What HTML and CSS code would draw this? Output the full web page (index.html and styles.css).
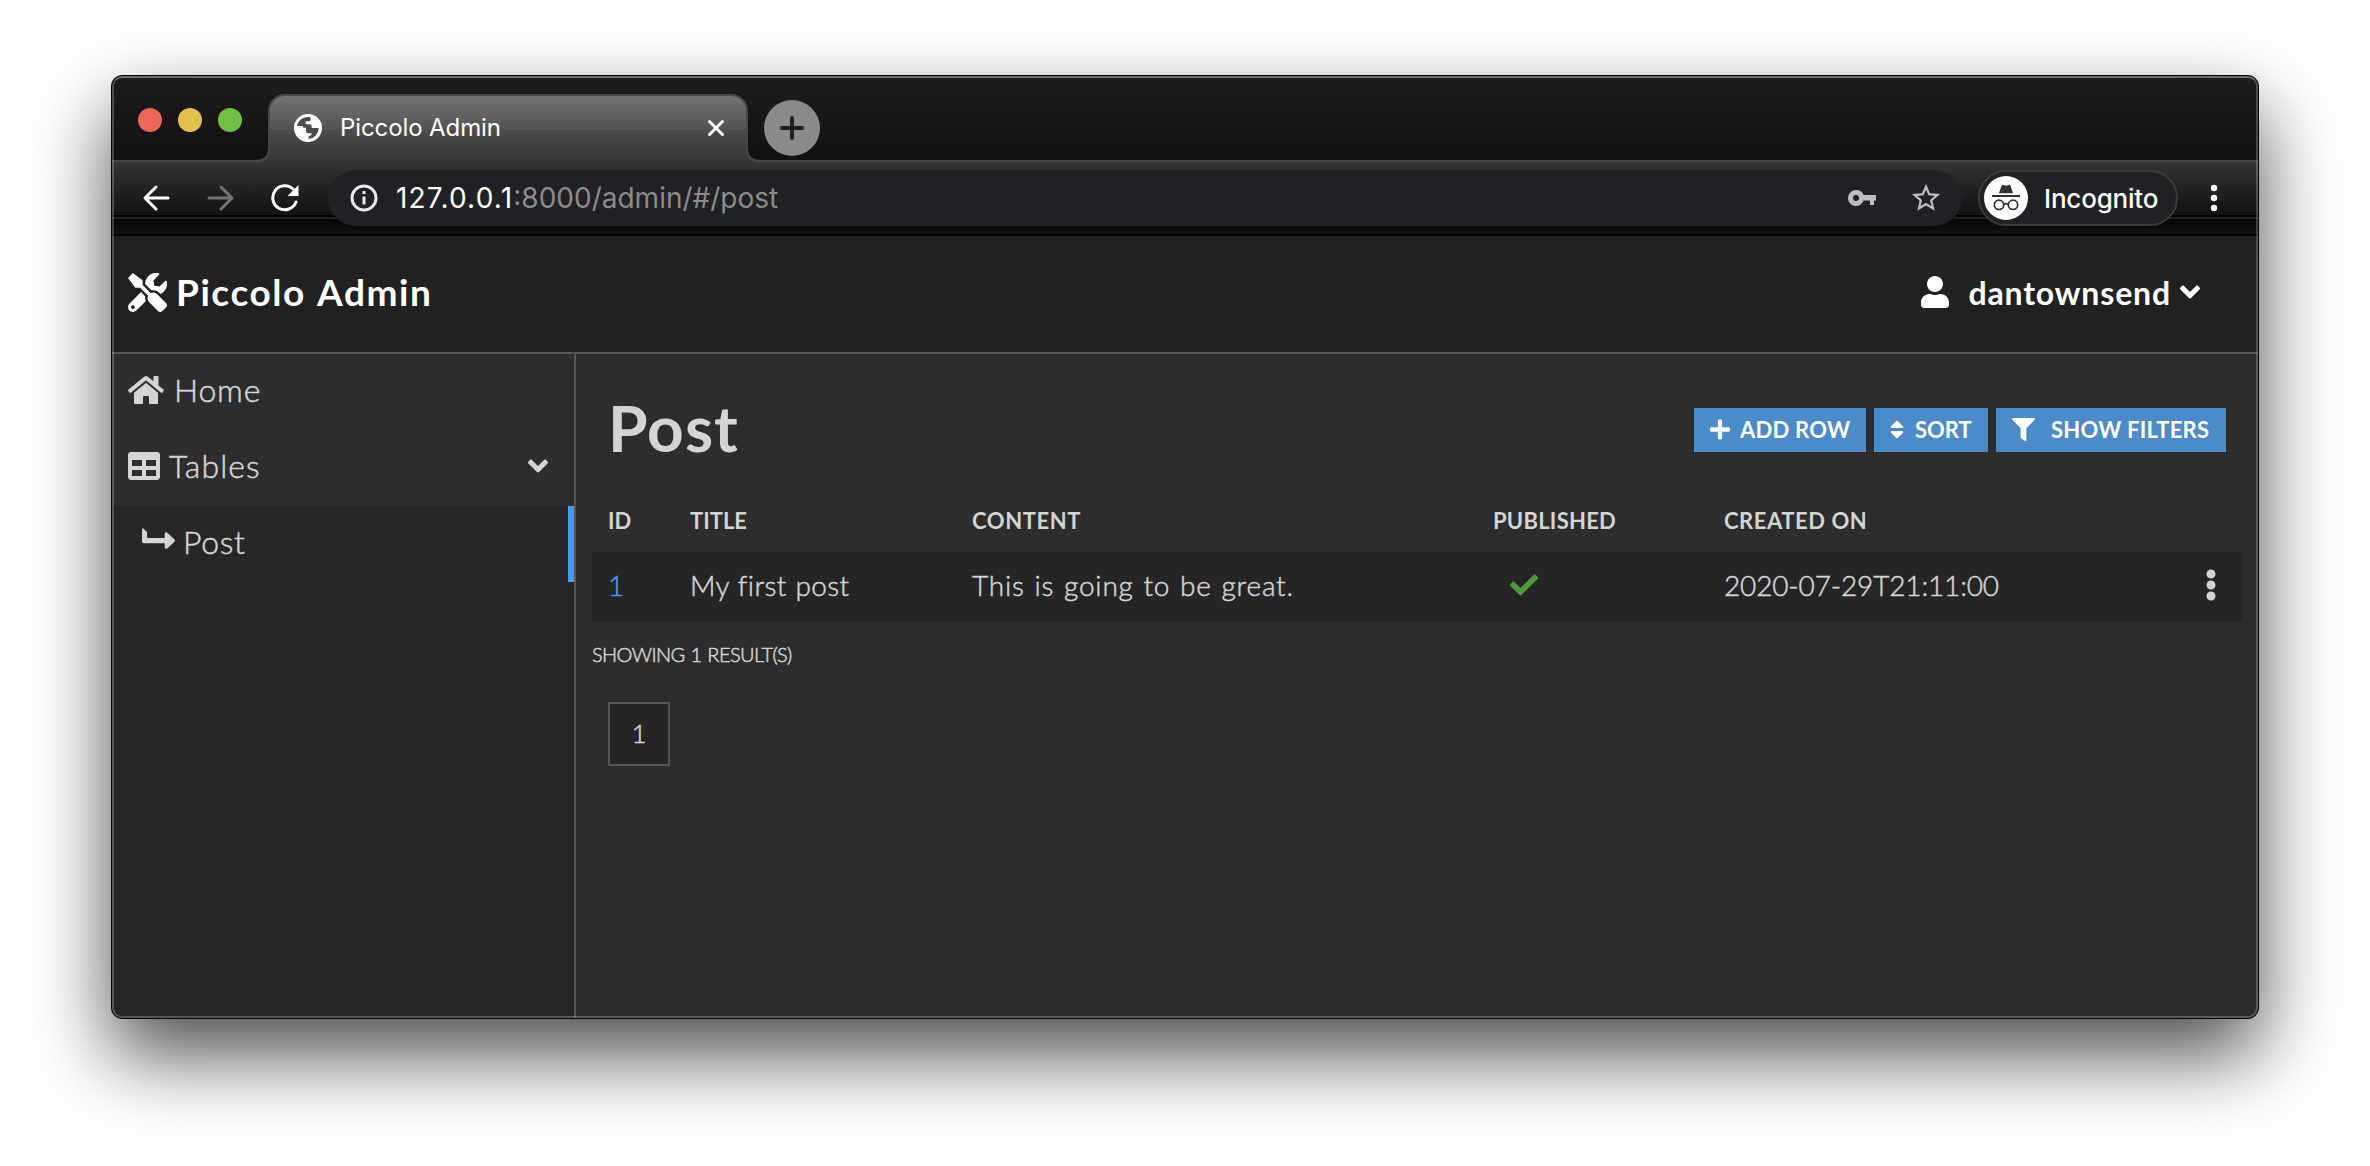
FILE: index.html
```html
<!DOCTYPE html>
<html lang="en">
<head>
<meta charset="utf-8">
<title>Piccolo Admin</title>
<link rel="stylesheet" href="styles.css">
</head>
<body>
<div class="window">
  <div class="tabstrip">
    <div class="lights"><i class="light red"></i><i class="light yellow"></i><i class="light green"></i></div>
    <div class="tab">
      <svg class="tab-shape" width="504" height="76" viewBox="0 0 504 76">
        <defs><linearGradient id="tabfill" x1="0" y1="0" x2="0" y2="1"><stop offset="0" stop-color="#757575"/><stop offset=".45" stop-color="#545454"/><stop offset=".46" stop-color="#4d4d4d"/><stop offset="1" stop-color="#303030"/></linearGradient></defs>
        <path d="M0 76V69Q13 67 13 54V17A16 16 0 0 1 29 1H475A16 16 0 0 1 491 17V54Q491 67 504 69V76Z" fill="url(#tabfill)"/>
        <path d="M0 67Q13 67 13 54V17A16 16 0 0 1 29 1H475A16 16 0 0 1 491 17V54Q491 67 504 67" fill="none" stroke="#484848" stroke-width="2"/>
      </svg>
      <svg class="globe" width="34" height="34" viewBox="-51 -51 102 102"><circle r="42" fill="#fff"/><path d="M-33-6A33 33 0 0 1 8-32V-25Q8-20 2-20H-7V-11H6Q11-11 11-5V0H32A33 33 0 0 1 2 33V24Q11 24 11 16H0Q-6 16-6 10V-1H-12Q-16-1-16-6Z" fill="#4c4c4c"/></svg>
      <span class="tab-title">Piccolo Admin</span>
      <svg class="tab-close" width="18" height="18" viewBox="0 0 18 18" stroke="#fff" stroke-width="3" stroke-linecap="round"><path d="M2.500 2.500l13 13M15.500 2.500l-13 13"/></svg>
    </div>
    <div class="newtab"><svg width="24" height="24" viewBox="0 0 24 24" stroke="#202124" stroke-width="4" stroke-linecap="round"><path d="M12 2v20M2 12h20"/></svg></div>
  </div>

  <div class="toolbar">
    <svg class="nav-back" width="28" height="28" viewBox="0 0 28 28" fill="none" stroke="#fff" stroke-width="3" stroke-linecap="round" stroke-linejoin="round"><path d="M26 14H3M14 3L3 14l11 11"/></svg>
    <svg class="nav-fwd" width="28" height="28" viewBox="0 0 28 28" fill="none" stroke="#737373" stroke-width="3" stroke-linecap="round" stroke-linejoin="round"><path d="M2 14h23M14 3l11 11-11 11"/></svg>
    <svg class="nav-reload" width="28" height="28" viewBox="0 0 28 28"><path d="M25 18A12 12 0 1 1 22.500 5.500" fill="none" stroke="#fff" stroke-width="3" stroke-linecap="round"/><path d="M27.500 1v11h-11z" fill="#fff"/></svg>
    <div class="omnibox">
      <svg class="info" width="28" height="28" viewBox="0 0 28 28"><circle cx="14" cy="14" r="12" fill="none" stroke="#e8eaed" stroke-width="3"/><path d="M12.500 12.500h3v8h-3zM12.500 7h3v3h-3z" fill="#e8eaed"/></svg>
      <span class="url"><b>127.0.0.1</b>:8000/admin/#/post</span>
      <svg class="key" width="28" height="18" viewBox="0 0 28 18" fill="#bdbdbd"><path fill-rule="evenodd" d="M8 1a8 8 0 1 0 7.600 10.500H22V16h4v-4.500h2V6H15.600A8 8 0 0 0 8 1zm0 5a3 3 0 1 1 0 6 3 3 0 0 1 0-6z"/></svg>
      <svg class="star" width="34" height="34" viewBox="0 0 24 24" fill="#bdbdbd"><path d="M22 9.240l-7.190-.62L12 2 9.190 8.630 2 9.240l5.460 4.730L5.820 21 12 17.270 18.180 21l-1.630-7.030L22 9.240zM12 15.400l-3.760 2.270 1-4.280-3.320-2.880 4.380-.38L12 6.100l1.710 4.040 4.380.38-3.320 2.880 1 4.280L12 15.400z"/></svg>
    </div>
    <div class="incognito">
      <svg width="44" height="44" viewBox="0 0 44 44"><circle cx="22" cy="22" r="22" fill="#fff"/><path d="M8 19h28v2H8zM14.800 17.200l3.200-8.400 4 1 4-1 3.200 8.400z" fill="#303134"/><g fill="none" stroke="#303134" stroke-width="1.700"><circle cx="15" cy="28.800" r="4.700"/><circle cx="29" cy="28.800" r="4.700"/><path d="M19.700 28.500q2.300-1.600 4.600 0"/></g></svg>
      <span>Incognito</span>
    </div>
    <svg class="menu-dots" width="8" height="28" viewBox="0 0 8 28" fill="#fff"><circle cx="4" cy="4" r="3.200"/><circle cx="4" cy="14" r="3.200"/><circle cx="4" cy="24" r="3.200"/></svg>
  </div>

  <header class="appbar">
    <svg width="39" height="39" viewBox="0 0 512 512" fill="#fff"><path d="M501.100 395.700L384 278.600c-23.100-23.100-57.600-27.600-85.400-13.900L192 158.100V96L64 0 0 64l96 128h62.100l106.600 106.600c-13.600 27.800-9.200 62.300 13.900 85.400l117.100 117.100c14.600 14.600 38.200 14.600 52.700 0l52.700-52.700c14.500-14.600 14.500-38.200 0-52.700zM331.700 225c28.300 0 54.900 11 74.900 31l19.400 19.400c15.800-6.900 30.800-16.500 43.800-29.500 37.100-37.100 49.700-89.300 37.900-136.700-2.200-9-13.500-12.100-20.100-5.500l-74.400 74.400-67.900-11.300L334 98.900l74.400-74.400c6.600-6.600 3.400-17.900-5.700-20.200-47.400-11.700-99.600.9-136.600 37.900-28.500 28.500-41.900 66.100-41.200 103.600l82.100 82.100c8.100-1.900 16.500-2.900 24.700-2.900zm-103.900 82l-56.700-56.700L18.700 402.800c-25 25-25 65.500 0 90.500s65.500 25 90.500 0l123.600-123.600c-7.600-19.900-9.900-41.600-5-62.700zM64 472c-13.200 0-24-10.800-24-24 0-13.300 10.700-24 24-24s24 10.700 24 24c0 13.200-10.700 24-24 24z"/></svg>
    <span class="brand">Piccolo Admin</span>
    <svg class="user" width="28" height="32" viewBox="0 0 448 512" fill="#fff"><path d="M224 256c70.700 0 128-57.300 128-128S294.700 0 224 0 96 57.300 96 128s57.300 128 128 128zm89.600 32h-16.700c-22.200 10.200-46.900 16-72.900 16s-50.600-5.800-72.900-16h-16.700C60.200 288 0 348.200 0 422.400V464c0 26.500 21.500 48 48 48h352c26.500 0 48-21.500 48-48v-41.600c0-74.200-60.200-134.400-134.400-134.400z"/></svg>
    <span class="username">dantownsend</span>
    <svg width="20" height="32" viewBox="0 0 320 512" fill="#fff"><path d="M143 352.300L7 216.300c-9.400-9.400-9.400-24.600 0-33.900l22.600-22.600c9.400-9.400 24.600-9.400 33.900 0l96.400 96.400 96.400-96.400c9.400-9.400 24.600-9.400 33.900 0l22.600 22.600c9.400 9.400 9.400 24.600 0 33.900l-136 136c-9.200 9.400-24.400 9.400-33.800 0z"/></svg>
  </header>

  <div class="page">
    <nav class="sidebar">
      <a class="item">
        <svg width="36" height="32" viewBox="0 0 576 512"><path d="M280.370 148.260L96 300.110V464a16 16 0 0 0 16 16l112.060-.29a16 16 0 0 0 15.920-16V368a16 16 0 0 1 16-16h64a16 16 0 0 1 16 16v95.640a16 16 0 0 0 16 16.050L464 480a16 16 0 0 0 16-16V300L295.670 148.260a12.190 12.190 0 0 0-15.300 0zM571.600 251.470L488 182.560V44.050a12 12 0 0 0-12-12h-56a12 12 0 0 0-12 12v72.610L318.470 43a48 48 0 0 0-61 0L4.340 251.470a12 12 0 0 0-1.600 16.900l25.500 31A12 12 0 0 0 45.150 301l235.220-193.740a12.190 12.190 0 0 1 15.300 0L530.900 301a12 12 0 0 0 16.900-1.600l25.500-31a12 12 0 0 0-1.700-16.930z"/></svg>
        <span class="t-home">Home</span>
      </a>
      <a class="item">
        <svg width="32" height="32" viewBox="0 0 512 512"><path d="M464 32H48C21.490 32 0 53.490 0 80v352c0 26.510 21.490 48 48 48h416c26.510 0 48-21.490 48-48V80c0-26.510-21.490-48-48-48zM224 416H64v-96h160v96zm0-160H64v-96h160v96zm224 160H288v-96h160v96zm0-160H288v-96h160v96z"/></svg>
        <span class="t-tables">Tables</span>
        <svg class="caret" width="20" height="32" viewBox="0 0 320 512"><path d="M143 352.300L7 216.300c-9.400-9.400-9.400-24.600 0-33.900l22.600-22.600c9.400-9.400 24.600-9.400 33.900 0l96.400 96.400 96.400-96.400c9.400-9.400 24.600-9.400 33.900 0l22.600 22.600c9.400 9.400 9.400 24.600 0 33.900l-136 136c-9.200 9.400-24.400 9.400-33.800 0z"/></svg>
      </a>
      <a class="item active">
        <svg class="level" width="33" height="21" viewBox="0 0 512 320"><path transform="matrix(0 1 -1 0 512 0)" d="M313.553 119.669L209.587 7.666c-9.485-10.214-25.676-10.229-35.174 0L70.438 119.669C56.232 134.969 67.062 160 88.025 160H152v272H68.024a11.996 11.996 0 0 0-8.485 3.515l-56 56C-4.021 499.074 1.333 512 12.024 512H208c13.255 0 24-10.745 24-24V160h63.966c20.878 0 31.851-24.969 17.587-40.331z"/></svg>
        <span class="t-post">Post</span>
      </a>
    </nav>
    <main class="main">
      <div class="title-row">
        <h1>Post</h1>
        <div class="actions">
          <a class="btn add"><svg width="20" height="23" viewBox="0 0 448 512"><path d="M416 208H272V64c0-17.670-14.330-32-32-32h-32c-17.670 0-32 14.330-32 32v144H32c-17.670 0-32 14.330-32 32v32c0 17.670 14.330 32 32 32h144v144c0 17.670 14.330 32 32 32h32c17.670 0 32-14.330 32-32V304h144c17.670 0 32-14.330 32-32v-32c0-17.670-14.330-32-32-32z"/></svg><span>ADD ROW</span></a>
          <a class="btn sort"><svg width="14" height="23" viewBox="0 0 320 512"><path d="M41 288h238c21.400 0 32.100 25.900 17 41L177 448c-9.400 9.400-24.600 9.400-33.900 0L24 329c-15.100-15.100-4.400-41 17-41zm255-105L177 64c-9.400-9.400-24.600-9.400-33.900 0L24 183c-15.100 15.100-4.400 41 17 41h238c21.400 0 32.100-25.900 17-41z"/></svg><span>SORT</span></a>
          <a class="btn filters"><svg width="23" height="23" viewBox="0 0 512 512"><path d="M487.976 0H24.028C2.710 0-8.047 25.866 7.058 40.971L192 225.941V432c0 7.831 3.821 15.170 10.237 19.662l80 55.980C298.020 518.690 320 507.493 320 487.980V225.941l184.947-184.970C520.021 25.896 509.338 0 487.976 0z"/></svg><span>SHOW FILTERS</span></a>
        </div>
      </div>
      <div class="table">
        <div class="tr head"><span>ID</span><span>TITLE</span><span class="h-content">CONTENT</span><span class="h-pub">PUBLISHED</span><span class="h-date">CREATED ON</span><span></span></div>
        <div class="tr row">
          <span class="link">1</span><span class="c-title">My first post</span><span class="c-content">This is going to be great.</span>
          <span class="c-pub"><svg width="28" height="28" viewBox="0 0 512 512"><path d="M173.898 439.404l-166.400-166.400c-9.997-9.997-9.997-26.206 0-36.204l36.203-36.204c9.997-9.998 26.207-9.998 36.204 0L192 312.690 432.095 72.596c9.997-9.997 26.207-9.997 36.204 0l36.203 36.204c9.997 9.997 9.997 26.206 0 36.204l-294.400 294.401c-9.998 9.997-26.207 9.997-36.204-.001z"/></svg></span>
          <span class="c-date">2020-07-29T21:11:00</span>
          <span class="c-more"><svg width="12" height="32" viewBox="0 0 192 512"><path d="M96 184c39.800 0 72 32.200 72 72s-32.200 72-72 72-72-32.200-72-72 32.200-72 72-72zM24 80c0 39.800 32.200 72 72 72s72-32.200 72-72S135.800 8 96 8 24 40.200 24 80zm0 352c0 39.800 32.200 72 72 72s72-32.200 72-72-32.200-72-72-72-72 32.200-72 72z"/></svg></span>
        </div>
      </div>
      <p class="showing">SHOWING 1 RESULT(S)</p>
      <div class="pager"><a>1</a></div>
    </main>
  </div>
</div>
</body>
</html>
```
FILE: styles.css
```css
* { box-sizing: border-box; }
svg { display: block; flex: none; }
body {
  margin: 0;
  height: 1166px;
  padding: 75px 111px 0;
  background: #fff;
  overflow: hidden;
  font-family: Lato, "Liberation Sans", sans-serif;
  white-space: nowrap;
}
.window {
  position: relative;
  width: 2148px;
  height: 944px;
  border: 1px solid #000;
  border-radius: 11px;
  background: #2d2d2d;
  box-shadow: 0 36px 80px rgba(0, 0, 0, .7);
  overflow: hidden;
  display: flex;
  flex-direction: column;
}
/* light rim just inside the window edge */
.window::after {
  content: "";
  position: absolute;
  inset: 0;
  border: 2px solid rgba(255, 255, 255, .22);
  border-top-color: rgba(255, 255, 255, .36);
  border-radius: 10px;
  pointer-events: none;
}

/* browser chrome */
.tabstrip {
  flex: none;
  height: 84px;
  display: flex;
  background: linear-gradient(#1d1d1d, #111);
}
.lights { display: flex; gap: 16px; padding: 32px 0 0 26px; width: 156px; }
.light { width: 24px; height: 24px; border-radius: 50%; }
.red { background: #ed665a; }
.yellow { background: #e1c04c; }
.green { background: #72be47; }
.tab {
  position: relative;
  width: 480px;
  height: 68px;
  margin-top: 18px;
  padding: 0 23px 0 23px;
  display: flex;
  align-items: center;
}
.tab-shape { position: absolute; left: -12px; top: 0; }
.globe, .tab-title, .tab-close { position: relative; }
.tab-title {
  margin-left: 15px;
  padding-bottom: 1px;
  font: 400 24px Inter, sans-serif;
  letter-spacing: -.1px;
  color: #fff;
}
.tab-close { margin-left: auto; }
.newtab {
  width: 56px;
  height: 56px;
  margin: 24px 0 0 16px;
  border-radius: 50%;
  background: #8a8a8a;
  display: flex;
  align-items: center;
  justify-content: center;
}
.toolbar {
  flex: none;
  height: 76px;
  border-top: 2px solid #424242;
  border-bottom: 2px solid #000;
  background: linear-gradient(#333, #121212 53px, #000 53px, #000 55px, #222 55px, #222 57px, #050505 57px, #121212);
  display: flex;
  align-items: center;
  font-family: Inter, sans-serif;
}
.nav-back { margin-left: 30px; }
.nav-fwd { margin-left: 37px; }
.nav-reload { margin-left: 36px; }
.omnibox {
  width: 1634px;
  height: 56px;
  margin-left: 29px;
  padding: 0 19px 0 22px;
  border-radius: 28px;
  background: #202124;
  display: flex;
  align-items: center;
}
.url { margin-left: 18px; font-size: 28px; color: #8b8b8c; }
.url b { font-weight: 400; letter-spacing: 1.2px; color: #fff; }
.key { margin-left: auto; }
.star { margin-left: 33px; }
.incognito {
  width: 200px;
  height: 56px;
  margin-left: 16px;
  padding-left: 4px;
  border: 2px solid #3c3c3d;
  border-radius: 28px;
  background: #202124;
  display: flex;
  align-items: center;
  font-size: 26px;
  font-weight: 500;
  letter-spacing: -.2px;
  color: #fff;
}
.incognito span { margin-left: 16px; }
.menu-dots { margin-left: 32px; }

/* application header */
.appbar {
  flex: none;
  height: 118px;
  padding: 0 58px 4px 16px;
  border-bottom: 2px solid #555;
  background: #212121;
  display: flex;
  align-items: center;
  color: #fff;
  font-weight: 700;
}
.brand { margin-left: 9px; padding-bottom: 1px; font-size: 37px; letter-spacing: 1.55px; word-spacing: 2px; }
.user { margin-left: auto; }
.username { margin: 0 9px 0 19px; font-size: 32px; letter-spacing: .85px; }

.page { flex: 1; display: flex; color: #d4d4d4; }
.page svg { fill: currentColor; }
.sidebar { width: 464px; border-right: 2px solid #555; background: #272727; }
.item {
  height: 76px;
  padding: 0 26px 4px 16px;
  display: flex;
  align-items: center;
  background: #2d2d2d;
  font-size: 32px;
  font-weight: 300;
}
.item span, .row > span, .showing, .pager a { -webkit-text-stroke: .5px currentColor; }
.item span { padding-bottom: 1px; }
.t-home { margin-left: 10px; letter-spacing: .8px; }
.t-tables { margin-left: 9px; letter-spacing: 1.1px; }
.t-post { margin-left: 8px; letter-spacing: .7px; }
.item .caret { margin-left: auto; }
.active { padding-left: 30px; background: #272727; border-right: 6px solid #419bf9; }
.level { margin-bottom: 8px; }

.main { flex: 1; padding: 0 16px; }
.title-row {
  height: 134px;
  padding: 18px 16px 0;
  display: flex;
  align-items: center;
  justify-content: space-between;
}
h1 { margin: 0 0 6px; font-size: 64px; font-weight: 700; letter-spacing: 1px; }
.actions { display: flex; gap: 8px; }
.btn {
  height: 44px;
  padding: 0 16px 1px;
  display: flex;
  align-items: center;
  background: #4c8bca;
  color: #fff;
  font-size: 22px;
  font-weight: 700;
}
.add { width: 172px; }
.sort { width: 114px; }
.filters { width: 230px; }
.add span { margin-left: 10px; letter-spacing: .25px; }
.sort span { margin-left: 11px; }
.filters span { margin-left: 16px; letter-spacing: .25px; }
.tr {
  display: grid;
  grid-template-columns: 82px 282px 521px 231px 1fr 47px;
  align-items: center;
}
.tr > span { padding-left: 16px; }
.head { height: 64px; font-size: 22px; font-weight: 700; }
.h-content { letter-spacing: .6px; }
.h-pub { letter-spacing: .25px; }
.h-date { letter-spacing: .55px; }
.row {
  height: 70px;
  padding-bottom: 4px;
  background: #252525;
  font-size: 28px;
  font-weight: 300;
}
.link { color: #419bf9; }
.c-title { letter-spacing: .4px; word-spacing: .6px; }
.c-content { letter-spacing: .8px; word-spacing: 1.4px; }
.c-date { letter-spacing: -.15px; }
.tr .c-pub { padding-left: 33px; color: #4c9a3c; }
.tr .c-more { padding: 0 0 0 10px; }
.showing { margin: 0; padding-top: 20px; line-height: 25px; font-size: 20px; font-weight: 300; letter-spacing: -.6px; word-spacing: 1px; }
.pager { padding: 35px 16px 0; }
.pager a {
  width: 62px;
  height: 64px;
  border: 2px solid #555;
  background: #252525;
  display: flex;
  align-items: center;
  justify-content: center;
  padding-bottom: 2px;
  font-size: 26px;
  font-weight: 300;
}
```
